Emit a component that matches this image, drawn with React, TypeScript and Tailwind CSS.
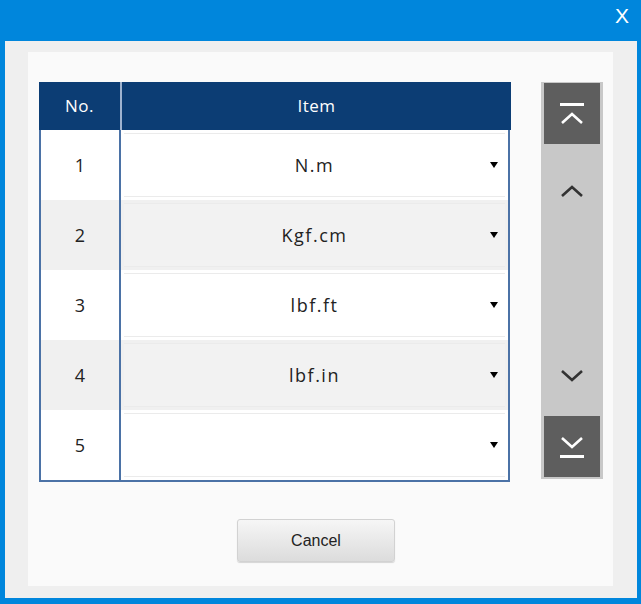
import React from "react";

const rows = [
  { no: 1, item: "N.m" },
  { no: 2, item: "Kgf.cm" },
  { no: 3, item: "lbf.ft" },
  { no: 4, item: "lbf.in" },
  { no: 5, item: "" },
];

function Chevron({ dir, color }: { dir: "up" | "down"; color: string }) {
  return (
    <svg width="24" height="14" viewBox="0 0 24 14">
      <path
        d={dir === "up" ? "M2 12 L12 3 L22 12" : "M2 2 L12 11 L22 2"}
        fill="none"
        stroke={color}
        strokeWidth="2.6"
      />
    </svg>
  );
}

function EdgeButton({ dir }: { dir: "up" | "down" }) {
  return (
    <div className="mx-[3px] h-[61px] bg-[#5e5e5e] flex flex-col items-center justify-center gap-[5px]">
      {dir === "up" && <div className="w-[24px] h-[3px] bg-white" />}
      <Chevron dir={dir} color="#ffffff" />
      {dir === "down" && <div className="w-[24px] h-[3px] bg-white" />}
    </div>
  );
}

export default function App() {
  return (
    <div
      className="w-[641px] h-[604px] bg-[#0086dc] flex flex-col"
      style={{ fontFamily: '"Open Sans", "Liberation Sans", sans-serif' }}
    >
      <div className="h-[41px] flex items-start justify-end pr-[12px] pt-[4px]">
        <span className="text-white text-[21px] leading-[24px]" style={{ fontFamily: '"Liberation Sans", sans-serif' }}>X</span>
      </div>
      <div className="ml-[5px] mr-[4px] mb-[6px] flex-1 bg-[#efefef] pl-[23px] pr-[24px] pt-[11px] pb-[12px] flex">
        <div className="flex-1 bg-[#fafafa] flex flex-col">
          <div className="flex pl-[11px] pt-[30px]">
            <div className="w-[472px] flex flex-col">
              <div className="h-[48px] bg-[#0c3d74] flex text-white text-[17px] tracking-[0.5px]">
                <div className="w-[83px] flex items-center justify-center border-r-2 border-[#9fb3cf]">No.</div>
                <div className="flex-1 flex items-center justify-center">Item</div>
              </div>
              <div className="border-l-[2px] border-r-[2px] border-b-[2px] border-[#4b72a6] mr-[1px]">
                {rows.map((r, i) => (
                  <div
                    key={r.no}
                    className={`h-[70px] flex ${i % 2 === 1 ? "bg-[#f0f0f0]" : "bg-white"}`}
                  >
                    <div className="w-[80px] flex items-center justify-center text-[18px] text-[#222] border-r-2 border-[#4b72a6]">
                      {r.no}
                    </div>
                    <div className="flex-1 p-[3px] flex">
                      <div
                        className={`flex-1 flex items-center relative border-y border-[#ebebeb] ${i % 2 === 1 ? "bg-[#f2f2f2]" : "bg-white"}`}
                      >
                        <span className="flex-1 text-center text-[18px] tracking-[1.5px] text-[#222]">{r.item}</span>
                        <span className="absolute right-[7px] top-1/2 -translate-y-1/2 w-0 h-0 border-l-[4px] border-r-[4px] border-t-[6px] border-l-transparent border-r-transparent border-t-black" />
                      </div>
                    </div>
                  </div>
                ))}
              </div>
            </div>
            <div className="ml-[30px] w-[62px] h-[397px] bg-[#c8c8c8] pt-[1px] flex flex-col">
              <EdgeButton dir="up" />
              <div className="flex-1 flex flex-col items-center justify-between pt-[40px] pb-[33px]">
                <Chevron dir="up" color="#333333" />
                <Chevron dir="down" color="#333333" />
              </div>
              <EdgeButton dir="down" />
              <div className="h-[2px]" />
            </div>
          </div>
          <div className="flex justify-center pt-[37px] pr-[9px]">
            <button
              className="w-[158px] h-[43px] rounded-[3px] border border-[#d2d2d2] bg-gradient-to-b from-[#f6f6f6] to-[#dcdcdc] text-[16px] text-[#222] shadow-[0_1px_1px_rgba(0,0,0,0.15)]"
              style={{ fontFamily: '"Liberation Sans", sans-serif' }}
            >
              Cancel
            </button>
          </div>
        </div>
      </div>
    </div>
  );
}
